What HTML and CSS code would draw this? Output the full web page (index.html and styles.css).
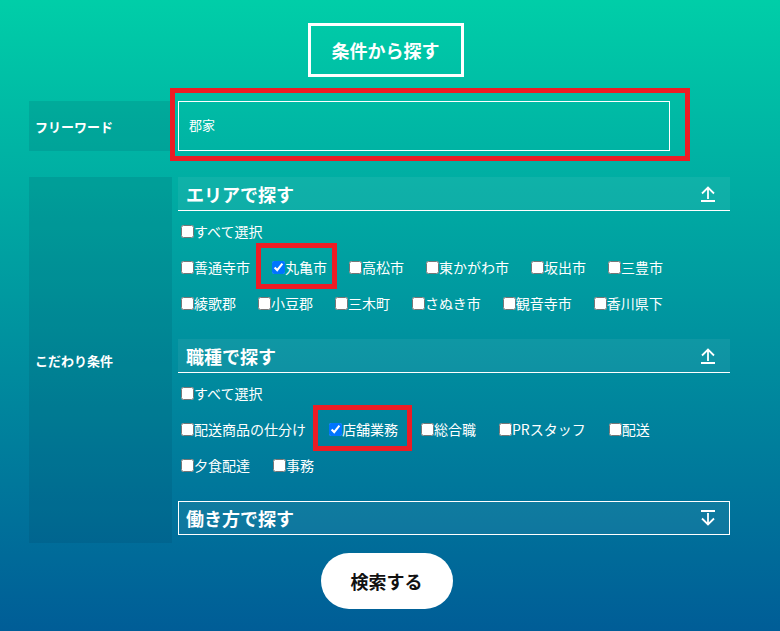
FILE: index.html
```html
<!DOCTYPE html>
<html lang="ja">

<head>
    <meta charset="UTF-8">
    <meta name="viewport" content="width=device-width, initial-scale=1.0">
    <title>条件から探す</title>
    <link rel="stylesheet" href="styles.css">
</head>

<body>
    <div class="search-box">
        <h1 class="search-title">条件から探す</h1>

        <div class="search-row free-row">
            <div class="search-label">フリーワード</div>
            <div class="free-field">
                <input class="free-input" type="text" value="郡家">
                <span class="mark mark-free"></span>
            </div>
        </div>

        <div class="search-row cond-row">
            <div class="search-label">こだわり条件</div>
            <div class="cond-body">

                <div class="cond-block">
                    <div class="cond-head">
                        <span>エリアで探す</span>
                        <svg class="cond-icon" viewBox="0 0 16 16" width="16" height="16">
                            <path d="M8 13V1.5M2 7.5L8 1.5L14 7.5M1 15H15" fill="none" stroke="#fff" stroke-width="1.8"/>
                        </svg>
                    </div>
                    <div class="cond-list">
                        <label class="cond-item"><input type="checkbox">すべて選択</label>
                        <div class="cond-items">
                            <label class="cond-item"><input type="checkbox">善通寺市</label>
                            <label class="cond-item"><input type="checkbox" checked>丸亀市<span class="mark mark-city"></span></label>
                            <label class="cond-item"><input type="checkbox">高松市</label>
                            <label class="cond-item"><input type="checkbox">東かがわ市</label>
                            <label class="cond-item"><input type="checkbox">坂出市</label>
                            <label class="cond-item"><input type="checkbox">三豊市</label>
                            <label class="cond-item"><input type="checkbox">綾歌郡</label>
                            <label class="cond-item"><input type="checkbox">小豆郡</label>
                            <label class="cond-item"><input type="checkbox">三木町</label>
                            <label class="cond-item"><input type="checkbox">さぬき市</label>
                            <label class="cond-item"><input type="checkbox">観音寺市</label>
                            <label class="cond-item"><input type="checkbox">香川県下</label>
                        </div>
                    </div>
                </div>

                <div class="cond-block">
                    <div class="cond-head">
                        <span>職種で探す</span>
                        <svg class="cond-icon" viewBox="0 0 16 16" width="16" height="16">
                            <path d="M8 13V1.5M2 7.5L8 1.5L14 7.5M1 15H15" fill="none" stroke="#fff" stroke-width="1.8"/>
                        </svg>
                    </div>
                    <div class="cond-list">
                        <label class="cond-item"><input type="checkbox">すべて選択</label>
                        <div class="cond-items job-items">
                            <label class="cond-item"><input type="checkbox">配送商品の仕分け</label>
                            <label class="cond-item"><input type="checkbox" checked>店舗業務<span class="mark mark-job"></span></label>
                            <label class="cond-item"><input type="checkbox">総合職</label>
                            <label class="cond-item"><input type="checkbox">PRスタッフ</label>
                            <label class="cond-item"><input type="checkbox">配送</label>
                            <label class="cond-item"><input type="checkbox">夕食配達</label>
                            <label class="cond-item"><input type="checkbox">事務</label>
                        </div>
                    </div>
                </div>

                <div class="cond-head cond-head-closed">
                    <span>働き方で探す</span>
                    <svg class="cond-icon" viewBox="0 0 16 16" width="16" height="16">
                        <path d="M8 3V14.5M2 8.5L8 14.5L14 8.5M1 1H15" fill="none" stroke="#fff" stroke-width="1.8"/>
                    </svg>
                </div>

            </div>
        </div>

        <button class="search-btn" type="button">検索する</button>
    </div>
</body>

</html>
```

FILE: styles.css
```css
* {
    box-sizing: border-box;
}

body {
    margin: 0;
    min-height: 631px;
    background: linear-gradient(#00cea8, #005d97);
    color: #fff;
    font-family: "Noto Sans CJK JP", "Noto Sans", sans-serif;
}

.search-box {
    padding: 23px 50px 0 29px;
}

.search-title {
    width: 156px;
    height: 54px;
    margin: 0 auto 24px auto;
    border: 3px solid #fff;
    display: flex;
    align-items: center;
    justify-content: center;
    font-size: 18px;
    font-weight: bold;
    line-height: 1;
    position: relative;
    left: 6px;
}

.search-row {
    display: grid;
    grid-template-columns: 143px 552px;
    column-gap: 6px;
}

.free-row {
    height: 50px;
    margin-bottom: 26px;
}

.search-label {
    background: rgba(0, 50, 70, 0.12);
    display: flex;
    align-items: center;
    padding-left: 6px;
    font-size: 13px;
    font-weight: bold;
}

.free-field {
    position: relative;
    width: 492px;
}

.free-input {
    width: 100%;
    height: 50px;
    background: transparent;
    border: 1px solid #fff;
    color: #fff;
    font-family: inherit;
    font-size: 13px;
    padding: 0 10px 4px 10px;
    outline: none;
}

/* cadres rouges d'annotation */
.mark {
    position: absolute;
    border: 5px solid #ec1c24;
    pointer-events: none;
}

.mark-free {
    left: -8px;
    right: -20px;
    top: -13px;
    bottom: -10px;
}

.mark-city {
    left: -13px;
    right: -10px;
    top: -13px;
    bottom: -11px;
}

.mark-job {
    left: -13px;
    right: -14px;
    top: -13px;
    bottom: -11px;
}

.cond-body {
    padding-bottom: 8px;
}

.cond-block {
    margin-bottom: 25px;
}

.cond-head {
    height: 34px;
    display: flex;
    align-items: center;
    justify-content: space-between;
    padding: 0 14px 0 8px;
    background: rgba(255, 255, 255, 0.06);
    border-bottom: 1px solid #fff;
    font-size: 18px;
    font-weight: bold;
    line-height: 1;
}

.cond-head-closed {
    border: 1px solid #fff;
    padding-left: 7px;
    padding-right: 13px;
}

.cond-icon {
    display: block;
}

.cond-list {
    display: flex;
    flex-direction: column;
    align-items: flex-start;
    row-gap: 14px;
    padding-top: 9px;
}

.cond-items {
    display: flex;
    flex-wrap: wrap;
    column-gap: 19px;
    row-gap: 14px;
}

.job-items {
    column-gap: 20px;
}

.cond-item {
    position: relative;
    display: flex;
    align-items: center;
    height: 22px;
    font-size: 14px;
    line-height: 22px;
}

.cond-item input {
    width: 13px;
    height: 13px;
    margin: 0 0 0 3px;
}

.search-btn {
    display: block;
    width: 132px;
    height: 56px;
    margin: 10px auto 0 auto;
    position: relative;
    left: 7px;
    border: none;
    border-radius: 28px;
    background: #fff;
    color: #111;
    font-family: inherit;
    font-size: 18px;
    font-weight: bold;
}
```
